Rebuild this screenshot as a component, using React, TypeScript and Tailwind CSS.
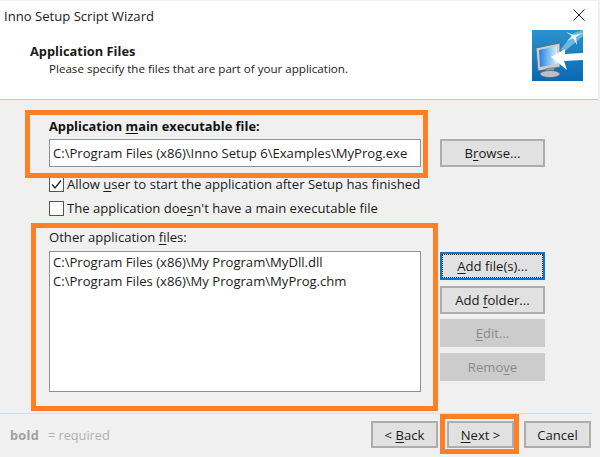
import React from 'react';

const U: React.FC<{ children: React.ReactNode }> = ({ children }) => <span className="underline underline-offset-2 decoration-1">{children}</span>;

const WizButton: React.FC<{ children: React.ReactNode; disabled?: boolean; focused?: boolean; className?: string }> = ({
  children,
  disabled,
  focused,
  className,
}) => (
  <div
    className={`flex items-center justify-center h-[28px] text-[13.1px] border-2 ${
      disabled
        ? 'bg-[#cccccc] border-[#cccccc] text-[#8a8a8a]'
        : focused
        ? 'bg-[#e1e1e1] border-[#0078d7] text-[#1a1a1a] outline-1 outline-dotted -outline-offset-3 outline-[#111111]'
        : 'bg-[#e1e1e1] border-[#adadad] text-[#1a1a1a]'
    } ${className ?? ''}`}
  >
    <span>{children}</span>
  </div>
);

const Logo = () => (
  <svg width="51" height="51" viewBox="0 0 51 51" className="block">
    <defs>
      <linearGradient id="bg" x1="0" y1="0" x2="0" y2="1">
        <stop offset="0" stopColor="#2a93cc" />
        <stop offset="1" stopColor="#0a68b4" />
      </linearGradient>
      <linearGradient id="screen" x1="0" y1="0" x2="1" y2="0">
        <stop offset="0" stopColor="#1f7fdc" />
        <stop offset="1" stopColor="#d6f0ff" />
      </linearGradient>
    </defs>
    <rect width="51" height="51" fill="url(#bg)" />
    <path d="M28 20 L42 3 L51 0 L51 6 L33 21Z" fill="#6db6de" />
    <path d="M34 2 L42 5 L51 3 L44 7 L45 15 L41 8 L35 11 L40 6Z" fill="#e8f6fd" />
    <path d="M4 18 L28 13 L28 37 L6 41Z" fill="#c9ced3" stroke="#5c6670" strokeWidth="0.8" />
    <path d="M7 20 L25 16 L25 34 L8 37Z" fill="url(#screen)" />
    <path d="M14 38 L22 37 L22 42 L14 42Z" fill="#8d959c" />
    <ellipse cx="18" cy="44" rx="10" ry="3.5" fill="#b9bfc4" stroke="#555" strokeWidth="0.6" />
    <path d="M19 27 L33 19 L33 24 L51 23 L51 30 L32 31 L35 40Z" fill="#ffffff" />
  </svg>
);

export default function App() {
  return (
    <div className="relative w-[600px] h-[457px] overflow-hidden bg-[#f0f0f0] text-[13.1px] leading-[18px] text-[#1a1a1a] font-['Open_Sans','Noto_Sans',sans-serif]">
      {/* header */}
      <div className="h-[99px] mt-px mr-[2px] bg-white border-b border-[#a9cde8]">
        <div className="flex justify-between items-center h-[29px] pl-[4px] pr-[13px]">
          <span>Inno Setup Script Wizard</span>
          <svg width="12" height="12" viewBox="0 0 12 12" className="mt-[-2px]">
            <path d="M0.5 0.5 L11.5 11.5 M11.5 0.5 L0.5 11.5" stroke="#222" strokeWidth="1" fill="none" />
          </svg>
        </div>
        <div className="flex justify-between pl-[30px] pr-[15px]">
          <div>
            <div className="font-bold text-[12.85px] leading-[18px] mt-[12px]">Application Files</div>
            <div className="pl-[19px] text-[11.6px] leading-[18px]">Please specify the files that are part of your application.</div>
          </div>
          <Logo />
        </div>
      </div>

      {/* form */}
      <div className="pl-[49px] pr-[55px] pt-[17px]">
        <div className="font-bold text-[12.85px] leading-[18px] text-[#111]">Application <U>m</U>ain executable file:</div>
        <div className="flex justify-between mt-[4px]">
          <div className="w-[372px] h-[28px] bg-white border border-[#8c9299] flex items-center pl-[3px]">
            C:\Program Files (x86)\Inno Setup 6\Examples\MyProg.exe
          </div>
          <WizButton className="w-[105px]">
            B<U>r</U>owse...
          </WizButton>
        </div>
        <div className="flex items-center gap-[3px] mt-[8px] h-[18px]">
          <div className="w-[15px] h-[15px] border border-[#555] bg-white flex items-center justify-center">
            <svg width="11" height="11" viewBox="0 0 11 11">
              <path d="M1 5.5 L4 9 L10 1.5" stroke="#222" strokeWidth="1.3" fill="none" />
            </svg>
          </div>
          <span>
            Allow <U>u</U>ser to start the application after Setup has finished
          </span>
        </div>
        <div className="flex items-center gap-[3px] mt-[6px] h-[18px]">
          <div className="w-[15px] h-[15px] border border-[#555] bg-white" />
          <span>
            The application doe<U>s</U>n't have a main executable file
          </span>
        </div>
        <div className="mt-[11px] leading-[18px]">
          Other application <U>f</U>iles:
        </div>
        <div className="flex justify-between mt-[5px]">
          <div className="w-[372px] h-[141px] bg-white border border-[#8c9299] pl-[3px] pt-px leading-[19px]">
            <div>C:\Program Files (x86)\My Program\MyDll.dll</div>
            <div>C:\Program Files (x86)\My Program\MyProg.chm</div>
          </div>
          <div className="w-[105px] flex flex-col mt-px">
            <WizButton focused>
              <U>A</U>dd file(s)...
            </WizButton>
            <WizButton className="mt-[6px]">
              Add <U>f</U>older...
            </WizButton>
            <WizButton disabled className="mt-[5px]">
              <U>E</U>dit...
            </WizButton>
            <WizButton disabled className="mt-[6px]">
              Remo<U>v</U>e
            </WizButton>
          </div>
        </div>
      </div>

      {/* footer */}
      <div className="mt-[21px] h-px mr-[8px] bg-[#cfe0ec]" />
      <div className="flex items-center pl-[10px] pr-[9px] pt-[7px]">
        <span className="font-bold text-[#a0a0a0] text-[12.7px] tracking-[0.3px]">bold</span>
        <span className="ml-[9px] text-[#b0b0b0] text-[12.7px]">= required</span>
        <div className="ml-auto flex">
          <WizButton className="w-[67px] !h-[27px]">
            &lt; <U>B</U>ack
          </WizButton>
          <WizButton className="w-[67px] !h-[27px] ml-[9px]">
            <U>N</U>ext &gt;
          </WizButton>
          <WizButton className="w-[67px] !h-[27px] ml-[10px]">Cancel</WizButton>
        </div>
      </div>

      {/* orange annotation boxes */}
      <div className="absolute left-[25px] top-[110px] w-[403px] h-[68px] border-[5px] border-[#ff7f27]" />
      <div className="absolute left-[31px] top-[223px] w-[407px] h-[188px] border-[5px] border-[#ff7f27]" />
      <div className="absolute left-[440px] top-[414px] w-[79px] h-[40px] border-[5px] border-[#ff7f27]" />
    </div>
  );
}
